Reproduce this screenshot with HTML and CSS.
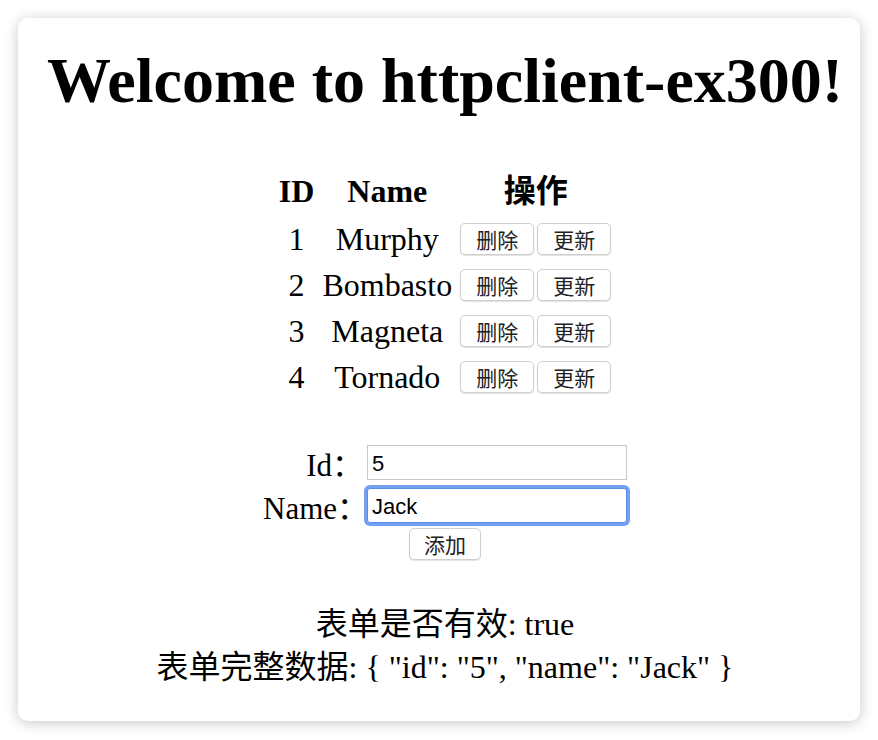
FILE: index.html
```html
<!DOCTYPE html>
<html lang="zh">
<head>
<meta charset="utf-8">
<title>httpclient-ex300</title>
<link rel="stylesheet" href="styles.css">
</head>
<body>
<div class="card">
  <h1 class="title">Welcome to httpclient-ex300!</h1>
  <table class="heroes">
    <thead>
      <tr><th>ID</th><th>Name</th><th>操作</th></tr>
    </thead>
    <tbody>
      <tr><td>1</td><td>Murphy</td><td><div class="ops"><button class="btn">删除</button><button class="btn">更新</button></div></td></tr>
      <tr><td>2</td><td>Bombasto</td><td><div class="ops"><button class="btn">删除</button><button class="btn">更新</button></div></td></tr>
      <tr><td>3</td><td>Magneta</td><td><div class="ops"><button class="btn">删除</button><button class="btn">更新</button></div></td></tr>
      <tr><td>4</td><td>Tornado</td><td><div class="ops"><button class="btn">删除</button><button class="btn">更新</button></div></td></tr>
    </tbody>
  </table>
  <form class="form">
    <div class="field">
      <label class="label">Id：</label>
      <input class="input" type="text" value="5">
    </div>
    <div class="field">
      <label class="label">Name：</label>
      <input class="input focused" type="text" value="Jack">
    </div>
    <button type="button" class="btn add">添加</button>
  </form>
  <div class="summary">
    <div class="line">表单是否有效: true</div>
    <div class="line">表单完整数据: { "id": "5", "name": "Jack" }</div>
  </div>
</div>
</body>
</html>
```
FILE: styles.css
```css
html, body {
  margin: 0;
  padding: 0;
  background: #ffffff;
}
body {
  padding: 18px;
  font-family: "Liberation Serif", "Noto Sans CJK SC", serif;
  color: #000;
}
.card {
  width: 842px;
  height: 703px;
  box-sizing: border-box;
  background: #fff;
  border-radius: 10px;
  box-shadow: 0 2px 14px rgba(0, 0, 0, 0.22);
  display: flex;
  flex-direction: column;
  align-items: center;
  padding: 27px 0 0 12px;
}
.title {
  margin: 0;
  font-size: 64px;
  font-weight: bold;
  line-height: 71px;
  white-space: nowrap;
}
.heroes {
  margin-top: 58px;
  border-collapse: collapse;
  font-size: 32px;
}
.heroes th {
  font-weight: bold;
  padding: 0 4px 8px;
  line-height: 34px;
}
.heroes td {
  text-align: center;
  padding: 0 4px;
  height: 46px;
  line-height: 34px;
}
.ops {
  display: flex;
  gap: 3px;
}
.btn {
  font-family: "Noto Sans CJK SC", sans-serif;
  font-size: 21px;
  height: 32px;
  padding: 0 15px;
  background: #fff;
  border: 1px solid #cfcfcf;
  border-radius: 5px;
  box-shadow: 0 1px 1px rgba(0, 0, 0, 0.12);
  color: #222;
  line-height: 29px;
}
.form {
  margin-top: 41px;
  display: flex;
  flex-direction: column;
  align-items: center;
}
.field {
  display: flex;
  align-items: center;
  height: 43px;
}
.label {
  width: 100px;
  text-align: right;
  font-size: 31px;
  margin-right: 4px;
  font-family: "Liberation Serif", "Noto Sans CJK SC", serif;
}
.input {
  width: 260px;
  height: 35px;
  box-sizing: border-box;
  border: 1px solid #c8c8c8;
  font-family: "Liberation Sans", sans-serif;
  font-size: 22px;
  padding: 2px 4px 0;
  margin: 0;
  outline: none;
}
.input.focused {
  border: 1px solid #5b8de8;
  border-radius: 3px;
  box-shadow: 0 0 0 3px rgba(100, 150, 238, 0.9);
}
.add {
  margin-top: 1px;
  padding: 0 14px;
}
.summary {
  margin-top: 43px;
  font-size: 32px;
  text-align: center;
  line-height: 43px;
}
```
